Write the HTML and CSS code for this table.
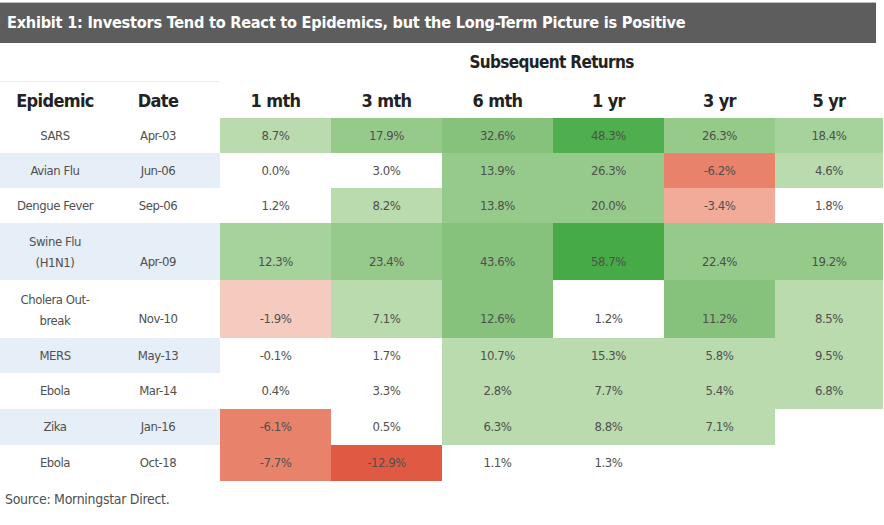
FILE: index.html
```html
<!DOCTYPE html>
<html>
<head>
<meta charset="utf-8">
<link rel="stylesheet" href="styles.css">
</head>
<body>
<div class="exhibit">
  <div class="title">Exhibit 1: Investors Tend to React to Epidemics, but the Long-Term Picture is Positive</div>
  <table class="grid">
    <colgroup>
      <col class="c-name"><col class="c-date">
      <col class="c-val"><col class="c-val"><col class="c-val"><col class="c-val"><col class="c-val"><col class="c-last">
    </colgroup>
    <thead>
      <tr class="group-row">
        <th class="rule" colspan="2"></th>
        <th colspan="6" class="group">Subsequent Returns</th>
      </tr>
      <tr class="head-row">
        <th>Epidemic</th><th class="dt">Date</th><th>1 mth</th><th>3 mth</th><th>6 mth</th><th>1 yr</th><th>3 yr</th><th>5 yr</th>
      </tr>
    </thead>
    <tbody>
      <tr class="row">
        <td class="lbl">SARS</td><td class="lbl dt">Apr-03</td>
        <td class="g1">8.7%</td><td class="g3">17.9%</td><td class="g4">32.6%</td><td class="g5">48.3%</td><td class="g3">26.3%</td><td class="g2">18.4%</td>
      </tr>
      <tr class="row alt">
        <td class="lbl">Avian Flu</td><td class="lbl dt">Jun-06</td>
        <td>0.0%</td><td>3.0%</td><td class="g3">13.9%</td><td class="g3">26.3%</td><td class="r3">-6.2%</td><td class="g1">4.6%</td>
      </tr>
      <tr class="row">
        <td class="lbl">Dengue Fever</td><td class="lbl dt">Sep-06</td>
        <td>1.2%</td><td class="g1">8.2%</td><td class="g3">13.8%</td><td class="g3">20.0%</td><td class="r2">-3.4%</td><td>1.8%</td>
      </tr>
      <tr class="row tall alt">
        <td class="lbl two">Swine Flu<br>(H1N1)</td><td class="lbl dt">Apr-09</td>
        <td class="g2">12.3%</td><td class="g3">23.4%</td><td class="g4">43.6%</td><td class="g6">58.7%</td><td class="g3">22.4%</td><td class="g3">19.2%</td>
      </tr>
      <tr class="row tall taller">
        <td class="lbl two">Cholera Out-<br>break</td><td class="lbl dt">Nov-10</td>
        <td class="r1">-1.9%</td><td class="g1">7.1%</td><td class="g4">12.6%</td><td>1.2%</td><td class="g4">11.2%</td><td class="g1">8.5%</td>
      </tr>
      <tr class="row alt">
        <td class="lbl">MERS</td><td class="lbl dt">May-13</td>
        <td>-0.1%</td><td>1.7%</td><td class="g1">10.7%</td><td class="g1">15.3%</td><td class="g1">5.8%</td><td class="g1">9.5%</td>
      </tr>
      <tr class="row wide">
        <td class="lbl">Ebola</td><td class="lbl dt">Mar-14</td>
        <td>0.4%</td><td>3.3%</td><td class="g1">2.8%</td><td class="g1">7.7%</td><td class="g1">5.4%</td><td class="g1">6.8%</td>
      </tr>
      <tr class="row alt wide">
        <td class="lbl">Zika</td><td class="lbl dt">Jan-16</td>
        <td class="r3">-6.1%</td><td>0.5%</td><td class="g1">6.3%</td><td class="g1">8.8%</td><td class="g1">7.1%</td><td></td>
      </tr>
      <tr class="row wide">
        <td class="lbl">Ebola</td><td class="lbl dt">Oct-18</td>
        <td class="r3">-7.7%</td><td class="r4">-12.9%</td><td>1.1%</td><td>1.3%</td><td></td><td></td>
      </tr>
    </tbody>
  </table>
  <div class="source">Source: Morningstar Direct.</div>
</div>
</body>
</html>
```

FILE: styles.css
```css
html, body {
  margin: 0;
  padding: 0;
  background: #ffffff;
}

body {
  font-family: "DejaVu Sans Condensed", "Liberation Sans", sans-serif;
  color: #4a4a4a;
}

.exhibit {
  width: 884px;
  padding-top: 2px;
}

.title {
  width: 876px;
  height: 41px;
  box-sizing: border-box;
  padding: 0 7px;
  border-top: 1px solid #bdbdbd;
  background: #5d5d5d;
  color: #ffffff;
  font-weight: bold;
  font-size: 16.2px;
  letter-spacing: -0.25px;
  line-height: 39px;
  white-space: nowrap;
}

.grid {
  border-collapse: collapse;
  table-layout: fixed;
  width: 883px;
}

.c-name { width: 110px; }
.c-date { width: 110px; }
.c-val { width: 111px; }
.c-last { width: 108px; }

.grid th, .grid td {
  box-sizing: border-box;
  padding: 0;
  text-align: center;
  vertical-align: middle;
}

.group-row th {
  height: 38px;
}

.group {
  color: #222222;
  font-size: 17px;
  letter-spacing: -0.65px;
  font-weight: bold;
  padding-top: 11px;
}

.rule {
  border-bottom: 1px solid #ececec;
}

.head-row th {
  height: 37px;
  color: #222222;
  font-size: 18px;
  letter-spacing: -0.65px;
  font-weight: bold;
  padding-top: 2px;
}

.row td {
  height: 35px;
  font-size: 13px;
  letter-spacing: -0.45px;
  color: #505050;
  line-height: 20px;
}

.row.wide td {
  height: 36px;
}

.row.tall td {
  height: 57px;
  vertical-align: bottom;
  padding-bottom: 8px;
}

.row.taller td {
  height: 58px;
  padding-bottom: 9px;
}

.row.tall td.two {
  vertical-align: middle;
  padding-bottom: 0;
  padding-top: 1px;
  line-height: 21px;
}

.grid .dt {
  padding-right: 14px;
}

.alt .lbl {
  background: #e6eef8;
}

.g1 { background: #b9dbad; }
.g2 { background: #a6d29b; }
.g3 { background: #95ca8a; }
.g4 { background: #86c27c; }
.g5 { background: #4fae4e; }
.g6 { background: #46aa46; }

.r1 { background: #f6cbbf; }
.r2 { background: #f1ab98; }
.r3 { background: #e8826a; }
.r4 { background: #e05a43; }

.source {
  padding: 10px 0 0 5px;
  font-size: 14px;
  letter-spacing: -0.3px;
  color: #505050;
}
```
